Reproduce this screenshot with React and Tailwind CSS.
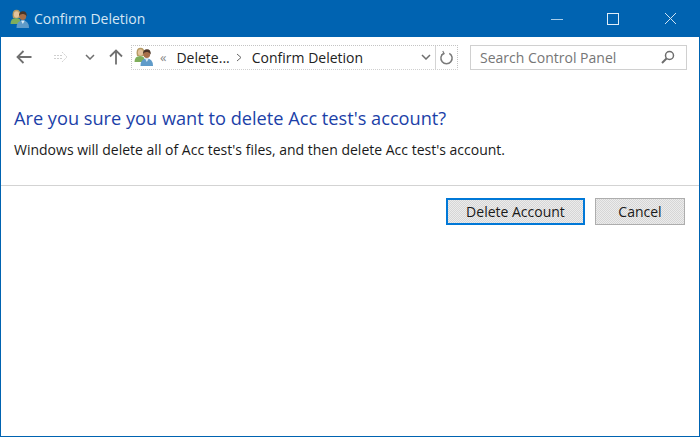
const font = { fontFamily: '"Open Sans", "Noto Sans", sans-serif' };

function UsersIcon() {
  return (
    <svg width="20" height="20" viewBox="0 0 20 20" className="shrink-0">
      {/* back person */}
      <path d="M2.5 6 Q2.5 0.8 6.5 0.8 Q10.5 0.8 10.5 6 L10 9 L3 9 Z" fill="#b59a63" />
      <ellipse cx="6.5" cy="5.5" rx="2.6" ry="3.2" fill="#e3c39c" />
      <path d="M0.5 15 Q0.5 9 6 9 Q10 9 10.5 12 L8 15 Z" fill="#7fae5c" />
      {/* front person */}
      <ellipse cx="12.8" cy="7" rx="3.4" ry="4" fill="#a86f48" />
      <path d="M9 7 Q9 2.2 13 2.2 Q17 2.2 16.8 7.5 Q15.5 4.5 12.5 5 Q10 5 9 7 Z" fill="#4a3426" />
      <path d="M6.5 19 Q6.5 11.5 12.8 11.5 Q19 11.5 19 19 Z" fill="#5f9bc9" />
      <path d="M11 11.5 L14.8 11.5 L12.8 15 Z" fill="#dcebf5" />
    </svg>
  );
}

function Arrow({ up }) {
  return (
    <svg width="16" height="16" viewBox="0 0 16 16" className={up ? "rotate-90" : ""}>
      <path d="M15.5 8 H1.5 M7.5 2 L1.5 8 L7.5 14" fill="none" stroke="#707070" strokeWidth="1.8" />
    </svg>
  );
}

function ForwardArrow() {
  return (
    <svg width="14" height="12" viewBox="0 0 14 12">
      <path
        d="M0 4.5 H9 M0 7.5 H9 M8 1 L13 6 L8 11"
        fill="none"
        stroke="#cfcfcf"
        strokeWidth="1"
        strokeDasharray="2 1"
      />
    </svg>
  );
}

function Chevron() {
  return (
    <svg width="10" height="6" viewBox="0 0 10 6">
      <path d="M1 1 L5 5 L9 1" fill="none" stroke="#6f6f6f" strokeWidth="1.5" />
    </svg>
  );
}

const buttonFill =
  "bg-[repeating-conic-gradient(#d6d6d6_0_25%,#ececec_0_50%)] bg-[length:2px_2px]";

export default function App() {
  return (
    <div
      className="w-[700px] h-[437px] bg-white border-l border-r border-b border-[#0063b1] flex flex-col overflow-hidden"
      style={font}
    >
      {/* Title bar */}
      <div className="h-[37px] shrink-0 bg-[#0063b1] flex items-center pl-[9px] text-white">
        <UsersIcon />
        <span className="ml-[4px] text-[14px] leading-[20px] pt-[1px] text-[#d5e6f4]">Confirm Deletion</span>
        <div className="ml-auto flex items-center">
          <svg width="12" height="12" viewBox="0 0 12 12" className="mr-[44px]">
            <path d="M0 6.5 H12" stroke="#a9cde9" strokeWidth="1" />
          </svg>
          <div className="w-[12px] h-[12px] border border-[#e0edf7] mr-[45px]" />
          <svg width="13" height="13" viewBox="0 0 13 13" className="mr-[22px]">
            <path d="M1 1 L12 12 M12 1 L1 12" stroke="#cfe3f3" strokeWidth="1" />
          </svg>
        </div>
      </div>

      {/* Navigation bar */}
      <div className="h-[40px] shrink-0 flex items-center">
        <div className="ml-[15px] flex">
          <Arrow />
        </div>
        <div className="ml-[22px] flex">
          <ForwardArrow />
        </div>
        <div className="ml-[17px] flex">
          <Chevron />
        </div>
        <div className="ml-[13px] flex">
          <Arrow up />
        </div>

        {/* Address box */}
        <div className="ml-[7px] w-[327px] h-[25px] flex items-center border border-dotted border-[#c4c4c4] border-b-[#cfcfcf] border-b-solid">
          <div className="ml-[2px] flex">
            <UsersIcon />
          </div>
          <span className="ml-[6px] text-[13px] text-[#888] leading-none">«</span>
          <span className="ml-[10px] text-[14px] text-[#222]">Delete...</span>
          <svg width="6" height="9" viewBox="0 0 6 9" className="ml-[6px]">
            <path d="M1 1 L5 4.5 L1 8" fill="none" stroke="#666" strokeWidth="1" />
          </svg>
          <span className="ml-[10px] text-[14px] text-[#222]">Confirm Deletion</span>
          <div className="ml-auto flex items-center h-full">
            <Chevron />
            <div className="ml-[4px] w-px h-full bg-[#d4d4d4]" />
            <svg width="15" height="15" viewBox="0 0 16 16" className="mx-[3px]">
              <path d="M5 3.5 A6 6 0 1 0 11 3.5" fill="none" stroke="#7a7a7a" strokeWidth="1.6" />
              <path d="M4 1 L5.5 4 L2.5 5" fill="none" stroke="#7a7a7a" strokeWidth="1.2" />
            </svg>
          </div>
        </div>

        {/* Search box */}
        <div className="ml-[12px] w-[217px] h-[25px] flex items-center border border-[#d0d0d0] border-t-dotted pl-[9px] pr-[11px]">
          <span className="text-[14px] text-[#767676]">Search Control Panel</span>
          <svg width="14" height="14" viewBox="0 0 14 14" className="ml-auto">
            <circle cx="8.5" cy="5.5" r="4" fill="none" stroke="#6d6d6d" strokeWidth="1.5" />
            <path d="M5.5 8.5 L1 13" stroke="#6d6d6d" strokeWidth="2" />
          </svg>
        </div>
      </div>

      {/* Message */}
      <div className="pl-[13px] pt-[28px] pb-[25px] border-b border-[#d3d3d3]">
        <h1 className="text-[18.2px] leading-[26px] text-[#1c3fa8] font-normal">
          Are you sure you want to delete Acc test's account?
        </h1>
        <p className="mt-[9px] text-[14px] leading-[20px] text-[#1a1a1a]">
          Windows will delete all of Acc test's files, and then delete Acc test's account.
        </p>
      </div>

      {/* Buttons */}
      <div className="flex justify-end gap-[10px] pt-[12px] pr-[14px]">
        <button className={`w-[139px] h-[27px] ${buttonFill} border-2 border-[#0078d7] text-[14px] text-[#1a1a1a]`}>
          Delete Account
        </button>
        <button className={`w-[90px] h-[27px] ${buttonFill} border border-[#adadad] text-[14px] text-[#1a1a1a]`}>
          Cancel
        </button>
      </div>
    </div>
  );
}
